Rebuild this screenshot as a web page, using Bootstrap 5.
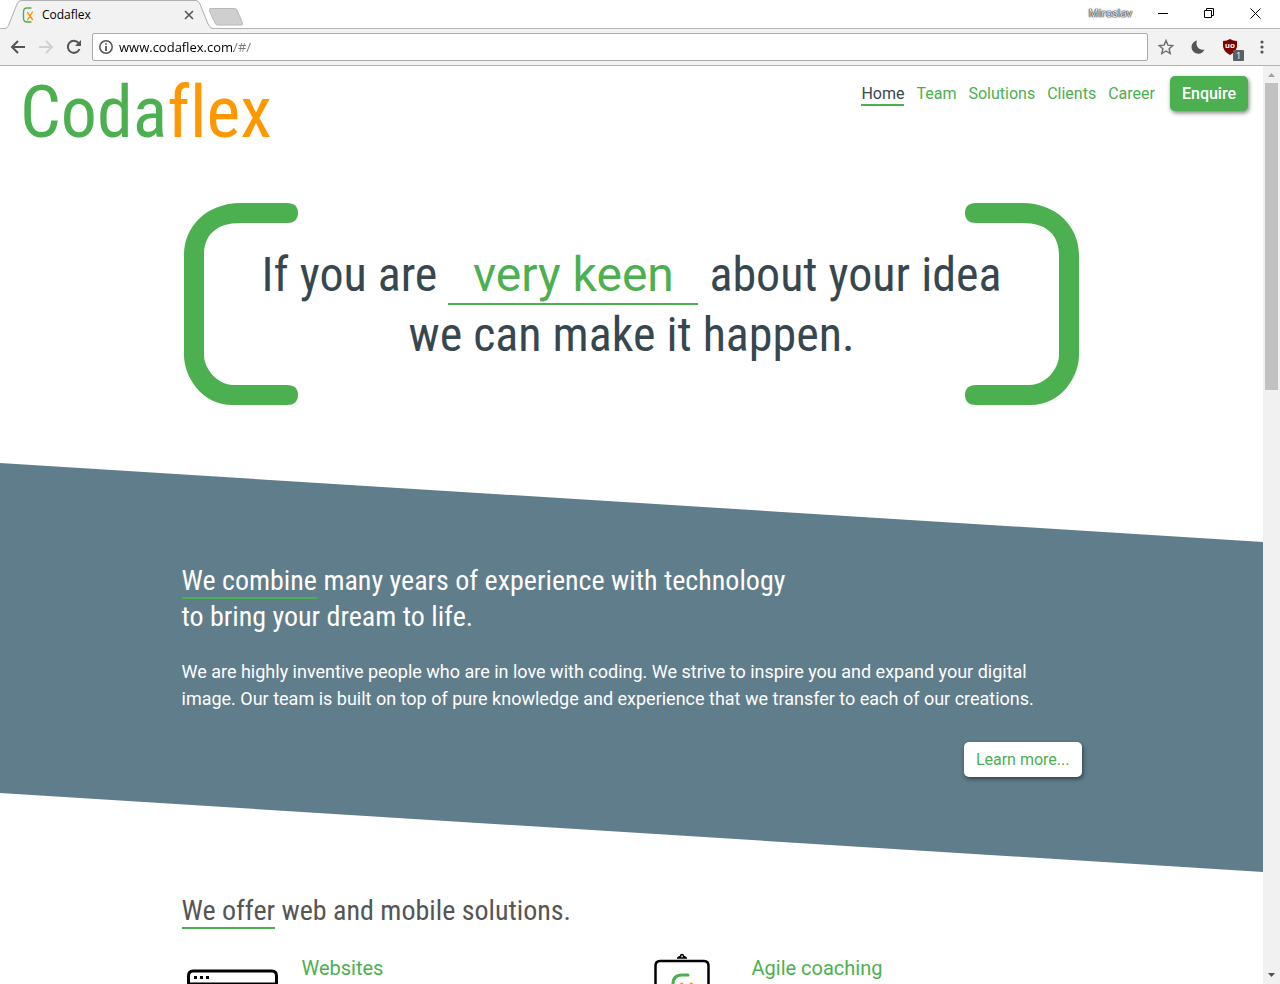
<!DOCTYPE html>
<html lang="en">
<head>
<meta charset="utf-8">
<meta name="viewport" content="width=device-width, initial-scale=1">
<title>Codaflex</title>
<link href="https://cdn.jsdelivr.net/npm/bootstrap@5.3.0/dist/css/bootstrap.min.css" rel="stylesheet">
<style>
:root{--leaf:#4caf50;--orange:#ff9800;--slate:#607d8b;--ink:#37474f}
body{font-family:Roboto,sans-serif;background:#fff}
svg{display:block;flex:none}
.ui-font{font-family:"Open Sans","Noto Sans",sans-serif}
.cond{font-family:"Roboto Condensed","Liberation Sans Narrow","Arial Narrow",sans-serif;font-weight:400}
/* browser frame */
.tabstrip{height:28px;padding-right:2px}
.browser-tab{width:209px;height:29px;padding-left:22px;z-index:1}
.tab-shape{left:5px;top:0;z-index:-1}
.tab-title{font-size:12px;line-height:16px;width:134px;margin:0 8px 0 6px;color:#000}
.plain-btn{border:0;background:none;padding:0;display:flex;align-items:center;justify-content:center}
.win-btn{width:46px;height:26px}
.profile{font-size:11px;line-height:16px;color:#fff;text-shadow:0 0 1px #000,0 0 1px #000,0 0 2px #333}
.toolbar{height:38px;background:#f2f2f2;border-top:1px solid #b6b4b6;border-bottom:1px solid #b6b4b6;padding:0 4px}
.tool-btn{width:28px;height:28px}
.address{height:28px;border:1px solid #a9a7a9;border-radius:2px;background:#fff;padding:0 6px;margin:0 4px}
.address input{border:0;outline:0;padding:0 0 0 6px;font-size:13px;line-height:20px;height:24px;color:transparent;background:linear-gradient(90deg,#000 121px,#777 121px);-webkit-background-clip:text;background-clip:text}
.ext-count{right:0;bottom:0;width:11px;height:11px;font-size:9px;line-height:11px;background:#5a5f66;color:#fff;border-radius:1px}
.ext-word{font:700 8px "Liberation Sans",sans-serif}
/* scrollbar */
.scroll-rail{width:17px;background:#f1f1f1}
.scroll-end{width:17px;height:17px}
.scroll-thumb{width:13px;height:307px;background:#c1c1c1}
/* site */
.site-top{padding:10px 15px 0 20px;height:90px}
.wordmark{font-size:72px;line-height:74px;color:var(--leaf);text-decoration:none;font-variant-ligatures:none}
.wordmark span{color:var(--orange)}
.site-nav a{color:var(--leaf);text-decoration:none;font-size:16px;line-height:20px;padding-top:2px;border-bottom:2px solid transparent}
.site-nav a.active{color:var(--ink);border-color:var(--leaf)}
.nav-links{gap:12px;margin-right:15px}
.pill{height:35px;border:0;border-radius:5px;font-size:16px;line-height:23px;padding:6px 12px;box-shadow:1px 2px 4px rgba(0,0,0,.5)}
.pill-green{background:var(--leaf);color:#fff;font-weight:500}
.pill-white{background:#fff;color:var(--leaf)}
.wrap{max-width:900px}
.hero{padding-top:46px;height:307px}
.hero h1{font-size:48px;line-height:59px;color:var(--ink);padding-top:43px;margin:0 -40px}
.blank{display:inline-block;width:250px;color:var(--leaf);font-family:Roboto,sans-serif;border-bottom:2px solid var(--leaf);line-height:57px}
.slant{background:var(--slate);color:#fff;height:409px;padding-top:100px;clip-path:polygon(0 0,100% 79px,100% 100%,0 calc(100% - 79px))}
.section-title{font-size:28px;line-height:36px}
.section-title span{border-bottom:2px solid var(--leaf)}
.lead-copy{font-size:18px;line-height:27px;margin:23px 0 30px}
.offer{padding-top:21px;color:#555}
.offer-list{padding-top:23px}
.offer h3{font-size:20px;line-height:24px;color:var(--leaf);font-weight:400}
.offer-icon{width:120px}
.offer-icon svg{overflow:visible}
</style>
</head>
<body class="vh-100 d-flex flex-column overflow-hidden">
<header class="ui-font flex-shrink-0">
  <div class="tabstrip d-flex align-items-start">
    <div class="browser-tab position-relative d-flex align-items-center">
      <svg class="tab-shape position-absolute" width="208" height="29"><path d="M0 28.500C3 28 3 26 4 24L12 4Q13.500 .5 16 .5H191Q193.500 .5 195 4L203 24Q205 28.500 208 28.500V29H0Z" fill="#f2f2f2"/><path d="M0 28.500C3 28 3 26 4 24L12 4Q13.500 .5 16 .5H191Q193.500 .5 195 4L203 24Q205 28.500 208 28.500" fill="none" stroke="#b0aeb0"/></svg>
      <svg width="14" height="16" viewBox="0 0 14 16" fill="none" stroke-width="1.400" stroke-linecap="round"><path d="M9 1H5Q1.500 1 1.500 5v6q0 4 3.500 4h4" stroke="#4caf50"/><path d="M5.500 5.500l5 7M10.500 5l-5 8" stroke="#ff9800"/></svg>
      <span class="tab-title">Codaflex</span>
      <button class="plain-btn" aria-label="Close tab"><svg width="10" height="10" stroke="#555" stroke-width="1.600"><path d="M1 1l8 8M9 1l-8 8"/></svg></button>
    </div>
    <button class="plain-btn mt-1 pt-1" aria-label="New tab"><svg width="36" height="18" viewBox="-1 1 36 18"><path d="M0 2Q-.5 .5 2 .5H25Q27 .5 28 2L33.500 15Q34 17 32 17H9Q7 17 6 15Z" transform="translate(-1 1)" fill="#cfcfcf" stroke="#b8b8b8"/></svg></button>
    <div class="ms-auto d-flex align-items-center">
      <span class="profile me-2">Miroslav</span>
      <button class="plain-btn win-btn" aria-label="Minimize"><svg width="10" height="10"><path d="M0 5.500h10" stroke="#000"/></svg></button>
      <button class="plain-btn win-btn" aria-label="Restore"><svg width="10" height="10" fill="none" stroke="#000"><path d="M.5 2.500h7v7h-7zM2.500 2.500v-2h7v7h-2"/></svg></button>
      <button class="plain-btn win-btn" aria-label="Close"><svg width="11" height="11" stroke="#000"><path d="M.5 .5l10 10M10.500 .5l-10 10"/></svg></button>
    </div>
  </div>
  <div class="toolbar d-flex align-items-center">
    <button class="plain-btn tool-btn" aria-label="Back"><svg width="16" height="14" fill="none" stroke="#555" stroke-width="2"><path d="M15 7H2M8 1L2 7l6 6"/></svg></button>
    <button class="plain-btn tool-btn" aria-label="Forward"><svg width="16" height="14" fill="none" stroke="#d0d0d0" stroke-width="2"><path d="M1 7h13M8 1l6 6-6 6"/></svg></button>
    <button class="plain-btn tool-btn" aria-label="Reload"><svg width="16" height="16" fill="none" stroke="#555" stroke-width="2"><path d="M13.500 10A6 6 0 1 1 12.500 4"/><path d="M15 1v6H9z" fill="#555" stroke="none"/></svg></button>
    <div class="address d-flex align-items-center flex-grow-1">
      <svg width="14" height="14" fill="none" stroke="#555" stroke-width="1.500"><circle cx="7" cy="7" r="6.200"/><path d="M7 6v5M7 3.200v1.600" stroke-width="1.800"/></svg>
      <input class="flex-grow-1 ui-font" type="text" aria-label="Address" value="www.codaflex.com/#/">
    </div>
    <button class="plain-btn tool-btn" aria-label="Bookmark"><svg width="16" height="16" viewBox="0 0 16 16" fill="none" stroke="#6b6b6b" stroke-width="1.400"><path d="M8 1.500l1.900 4.600 4.900.4-3.700 3.200 1.100 4.800L8 12l-4.200 2.500 1.100-4.800L1.200 6.500l4.900-.4z"/></svg></button>
    <button class="plain-btn tool-btn ms-1" aria-label="Night mode"><svg width="14" height="14"><path d="M6 .5A6.700 6.700 0 1 0 13.500 9.500C8 11 4 6 6 .5Z" fill="#555"/></svg></button>
    <button class="plain-btn tool-btn ms-1 position-relative" aria-label="Content blocker"><svg width="16" height="18" viewBox="0 0 16 18"><path d="M8 1Q11 3 15 3V8Q15 13 8 17Q1 13 1 8V3Q5 3 8 1Z" fill="#800000"/><text class="ext-word" x="8" y="10" text-anchor="middle" fill="#fff">uo</text></svg><span class="ext-count position-absolute">1</span></button>
    <button class="plain-btn tool-btn ms-1" aria-label="Menu"><svg width="4" height="14" fill="#555"><circle cx="2" cy="2" r="1.600"/><circle cx="2" cy="7" r="1.600"/><circle cx="2" cy="12" r="1.600"/></svg></button>
  </div>
</header>
<div class="d-flex flex-grow-1 overflow-hidden">
  <main class="flex-grow-1 overflow-hidden">
    <div class="site-top d-flex justify-content-between align-items-start">
      <a href="#" class="wordmark cond">Coda<span>flex</span></a>
      <nav class="site-nav d-flex align-items-center">
        <div class="nav-links d-flex">
          <a href="#" class="active">Home</a><a href="#">Team</a><a href="#">Solutions</a><a href="#">Clients</a><a href="#">Career</a>
        </div>
        <button class="pill pill-green">Enquire</button>
      </nav>
    </div>
    <section class="hero">
      <div class="wrap mx-auto d-flex justify-content-between">
        <svg width="117" height="204" viewBox="1 0 117 204"><path d="M60 1H106Q117 1 117 11T106 21H60C34 21 23 34 23 53V153C23 168 38 183 52 183H106Q117 183 117 193T106 203H52C20 203 3 174 3 153V53C3 25 25 1 60 1Z" fill="#4caf50"/></svg>
        <h1 class="cond text-center text-nowrap">If you are <span class="blank">very keen</span> about your idea<br>we can make it happen.</h1>
        <svg width="117" height="204" viewBox="0 0 117 204"><g transform="translate(117) scale(-1 1)"><path d="M60 1H106Q117 1 117 11T106 21H60C34 21 23 34 23 53V153C23 168 38 183 52 183H106Q117 183 117 193T106 203H52C20 203 3 174 3 153V53C3 25 25 1 60 1Z" fill="#4caf50"/></g></svg>
      </div>
    </section>
    <section class="slant">
      <div class="wrap mx-auto">
        <h2 class="section-title cond mb-0"><span>We combine</span> many years of experience with technology<br>to bring your dream to life.</h2>
        <p class="lead-copy">We are highly inventive people who are in love with coding. We strive to inspire you and expand your digital image. Our team is built on top of pure knowledge and experience that we transfer to each of our creations.</p>
        <div class="d-flex justify-content-end"><button class="pill pill-white">Learn more...</button></div>
      </div>
    </section>
    <section class="offer">
      <div class="wrap mx-auto">
        <h2 class="section-title cond mb-0"><span>We offer</span> web and mobile solutions.</h2>
        <div class="offer-list row g-0">
          <div class="col-6 d-flex">
            <div class="offer-icon pt-3"><svg class="ms-1" width="93" height="70" viewBox="0 0 93 70" fill="none" stroke="#000" stroke-width="3"><path d="M2.500 68V8Q2.500 3 7 3H86Q90.500 3 90.500 8V68ZM2.500 16H90.500"/><path d="M8 9.500h3M14 9.500h3M20 9.500h3"/></svg></div>
            <h3 class="mt-1">Websites</h3>
          </div>
          <div class="col-6 d-flex">
            <div class="offer-icon"><svg class="ms-4" width="60" height="90" viewBox="4 -2 60 90" fill="none" stroke="#000" stroke-width="2.500"><path d="M1.500 88V12Q1.500 7 6 7H50Q54.500 7 54.500 12V88Z" transform="translate(2)"/><path d="M25 4h10M26.500 3.500q.5-1 2-1 0-2 1.500-2t1.500 2q1.500 0 2 1" stroke-width="1.500"/><path d="M36 21H30Q21 21 21 30V45" stroke="#4caf50" stroke-width="3" stroke-linecap="round"/><path d="M29 29l10 14M40 29L29 45" stroke="#ff9800" stroke-width="3"/></svg></div>
            <h3 class="mt-1">Agile coaching</h3>
          </div>
        </div>
      </div>
    </section>
  </main>
  <div class="scroll-rail d-flex flex-column align-items-center flex-shrink-0" aria-hidden="true">
    <svg class="scroll-end" viewBox="0 0 17 17"><path d="M5 11L8.500 7L12 11Z" fill="#a3a3a3"/></svg>
    <div class="scroll-thumb"></div>
    <svg class="scroll-end mt-auto" viewBox="0 0 17 17"><path d="M5 6L8.500 10L12 6Z" fill="#505050"/></svg>
  </div>
</div>
<script src="https://cdn.jsdelivr.net/npm/bootstrap@5.3.0/dist/js/bootstrap.bundle.min.js"></script>
</body>
</html>
